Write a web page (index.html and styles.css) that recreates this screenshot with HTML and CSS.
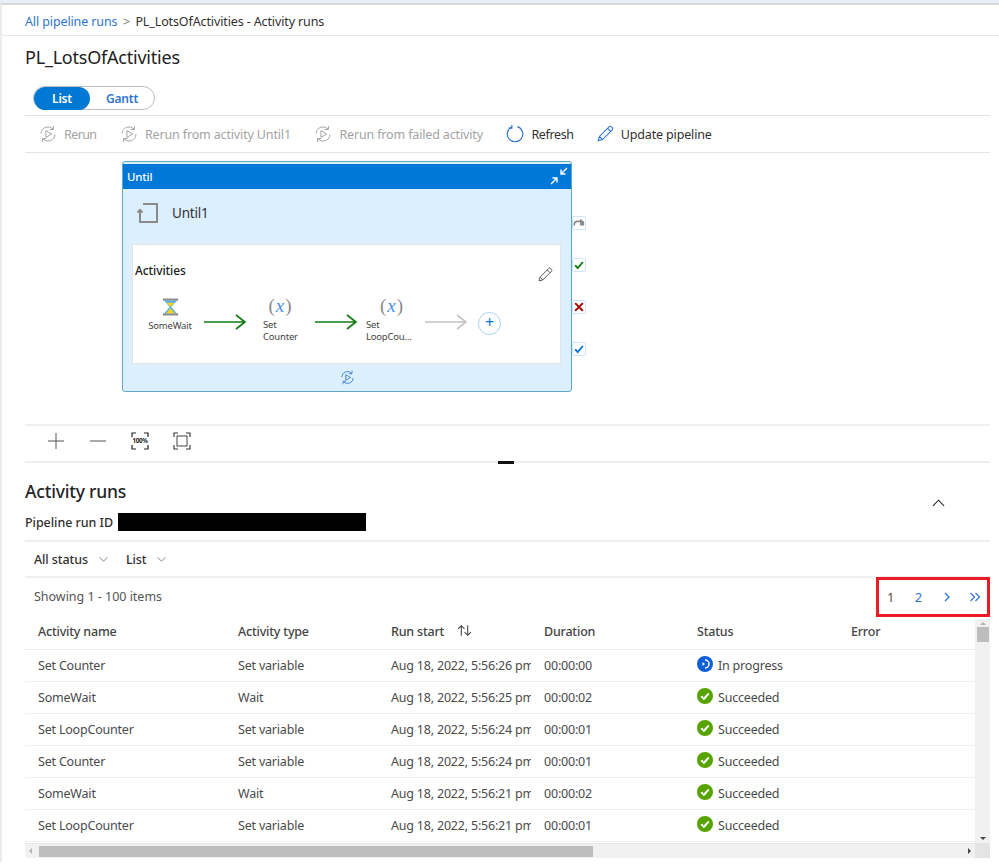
FILE: index.html
```html
<!DOCTYPE html>
<html lang="en">
<head>
<meta charset="utf-8">
<title>PL_LotsOfActivities - Activity runs</title>
<link rel="stylesheet" href="styles.css">
</head>
<body>
<svg class="defs" width="0" height="0" aria-hidden="true">
  <symbol id="rerun" viewBox="0 0 20 20">
    <path d="M2.300 9.500A7.700 7.700 0 0 1 15.600 4.500M17.700 10.500A7.700 7.700 0 0 1 4.400 15.500" fill="none" stroke="currentColor" stroke-width="1.100"/>
    <path d="M16 1v4h-4M4 19v-4h4" fill="none" stroke="currentColor" stroke-width="1.100"/>
    <path d="M7.700 6.200l6.300 3.800-6.300 3.800z" fill="none" stroke="currentColor" stroke-width="1.100"/>
  </symbol>
  <symbol id="pencil" viewBox="0 0 20 20">
    <path d="M2.500 17.500l1.300-4.800L14.500 2a1.900 1.900 0 0 1 2.700 0l.8.800a1.900 1.900 0 0 1 0 2.700L7.300 16.200zM3.800 12.700l3.500 3.500M12.800 3.700l3.500 3.500" fill="none" stroke="currentColor" stroke-width="1.200"/>
  </symbol>
  <symbol id="ok" viewBox="0 0 16 16">
    <circle cx="8" cy="8" r="8" fill="#57a300"/>
    <path d="M4.300 8.300l2.600 2.600 4.800-5.400" fill="none" stroke="#fff" stroke-width="2"/>
  </symbol>
  <symbol id="arrow" viewBox="0 0 42 16">
    <path d="M0 8h41M32 1l9 7-9 7" fill="none" stroke="currentColor" stroke-width="1.700"/>
  </symbol>
  <symbol id="chev" viewBox="0 0 12 8">
    <path d="M1.500 1.500L6 6l4.500-4.500" fill="none" stroke="currentColor" stroke-width="1"/>
  </symbol>
</svg>

<div class="topstrip"></div>
<div class="shell">
  <nav class="crumbs">
    <a class="link">All pipeline runs</a><span class="sep">&gt;</span><span>PL_LotsOfActivities - Activity runs</span>
  </nav>

  <main class="content">
    <h1 class="title">PL_LotsOfActivities</h1>
    <div class="toggle"><span class="toggle-on">List</span><span class="toggle-off">Gantt</span></div>

    <div class="toolbar">
      <span class="tool tool-off tool-short"><svg class="ico"><use href="#rerun"/></svg>Rerun</span>
      <span class="tool tool-off"><svg class="ico"><use href="#rerun"/></svg>Rerun from activity Until1</span>
      <span class="tool tool-off"><svg class="ico"><use href="#rerun"/></svg>Rerun from failed activity</span>
      <span class="tool tool-refresh"><svg class="ico ico-blue" viewBox="0 0 20 20"><path d="M6.300 2.300A8.600 8.600 0 1 0 12.500 1.800" fill="none" stroke="currentColor" stroke-width="1.300"/><path d="M6.500 0v3.500H3" fill="none" stroke="currentColor" stroke-width="1.300"/></svg>Refresh</span>
      <span class="tool"><svg class="ico ico-blue"><use href="#pencil"/></svg>Update pipeline</span>
    </div>

    <section class="canvas">
      <div class="node">
        <header class="node-head">
          <span>Until</span>
          <svg class="collapse" viewBox="0 0 18 18"><path d="M1 17l6-6M2.500 11H7v4.500M17 1l-6 6M15.500 7H11V2.500" fill="none" stroke="#fff" stroke-width="1.400"/></svg>
        </header>
        <div class="node-name">
          <svg class="until-ico" viewBox="0 0 22 22"><path d="M6 2h14v18H3v-11M0.500 10.500L3 8l2.500 2.500" fill="none" stroke="#8a8a8a" stroke-width="2"/></svg>
          <span>Until1</span>
        </div>
        <div class="inner">
          <div class="inner-head">
            <span>Activities</span>
            <svg class="inner-pen"><use href="#pencil"/></svg>
          </div>
          <div class="flow">
            <div class="act act-wait">
              <svg class="hour" viewBox="0 0 18 20"><path d="M1 1h16v2.500H1zM1 16.500h16V19H1z" fill="#8d8d8d"/><path d="M2.500 3.500h13L10 10l5.500 6.500h-13L8 10z" fill="#50b0f0"/><path d="M5 5.500h8L9 10zM9 11l4.500 5.500h-9z" fill="#fcd116"/></svg>
              <span class="act-label">SomeWait</span>
            </div>
            <svg class="arrow arrow-green"><use href="#arrow"/></svg>
            <div class="act act-a">
              <span class="var">(<i>x</i>)</span>
              <span class="act-label">Set<br>Counter</span>
            </div>
            <svg class="arrow arrow-green"><use href="#arrow"/></svg>
            <div class="act act-b">
              <span class="var">(<i>x</i>)</span>
              <span class="act-label">Set<br>LoopCou...</span>
            </div>
            <svg class="arrow arrow-grey"><use href="#arrow"/></svg>
            <span class="add">+</span>
          </div>
        </div>
        <div class="node-foot"><svg class="foot-ico"><use href="#rerun"/></svg></div>
        <div class="side">
          <span class="side-btn"><svg viewBox="0 0 14 14"><path d="M1.500 10V8.500a3.500 3.500 0 0 1 3.500-3.500h5" fill="none" stroke="#8a8a8a" stroke-width="2"/><path d="M8.500 2l4.500 3.500V10H8z" fill="#8a8a8a"/></svg></span>
          <span class="side-btn"><svg viewBox="0 0 14 14"><path d="M2.500 7.500l3 3 6-7" fill="none" stroke="#107c10" stroke-width="2.200"/></svg></span>
          <span class="side-btn"><svg viewBox="0 0 14 14"><path d="M2.500 2.500l9 9M11.500 2.500l-9 9" fill="none" stroke="#a80000" stroke-width="2.400"/></svg></span>
          <span class="side-btn"><svg viewBox="0 0 14 14"><path d="M2.500 7.500l3 3 6-7" fill="none" stroke="#0078d7" stroke-width="2.200"/></svg></span>
        </div>
      </div>
    </section>

    <div class="zoombar">
      <svg class="zoom" viewBox="0 0 16 16"><path d="M0 8h16M8 0v16" fill="none" stroke="#555" stroke-width="1"/></svg>
      <svg class="zoom" viewBox="0 0 16 16"><path d="M0 8h16" fill="none" stroke="#555" stroke-width="1"/></svg>
      <svg class="zoom" viewBox="0 0 16 16"><path d="M0 4V0h4M12 0h4v4M16 12v4h-4M4 16H0v-4" fill="none" stroke="#222" stroke-width="1.200"/><text class="zoom-text" x="8" y="10.200" text-anchor="middle">100%</text></svg>
      <svg class="zoom" viewBox="0 0 16 16"><path d="M0 4V0h4M12 0h4v4M16 12v4h-4M4 16H0v-4" fill="none" stroke="#333" stroke-width="1.100"/><rect x="3" y="3" width="10" height="10" fill="none" stroke="#444" stroke-width="1"/></svg>
    </div>

    <div class="splitter"><span class="grip"></span></div>

    <div class="runs-head">
      <div>
        <h2 class="runs-title">Activity runs</h2>
        <div class="runid"><span>Pipeline run ID</span><span class="redact"></span></div>
      </div>
      <svg class="collapse-up" viewBox="0 0 14 8"><path d="M1 7l6-6 6 6" fill="none" stroke="#222" stroke-width="1.200"/></svg>
    </div>

    <div class="filters">
      <span class="filter">All status<svg class="chev"><use href="#chev"/></svg></span>
      <span class="filter">List<svg class="chev"><use href="#chev"/></svg></span>
    </div>

    <div class="countrow">
      <span class="count">Showing 1 - 100 items</span>
      <div class="pager">
        <span>1</span>
        <a class="link">2</a>
        <a class="link pg-ico"><svg viewBox="0 0 8 10"><path d="M2 1l4 4-4 4" fill="none" stroke="currentColor" stroke-width="1.300"/></svg></a>
        <a class="link pg-ico pg-last"><svg viewBox="0 0 12 10"><path d="M1.500 1l4 4-4 4M6.500 1l4 4-4 4" fill="none" stroke="currentColor" stroke-width="1.200"/></svg></a>
      </div>
    </div>

    <div class="grid-wrap">
      <div class="grid-main">
        <div class="row row-head">
          <span class="cell">Activity name</span>
          <span class="cell">Activity type</span>
          <span class="cell">Run start<svg class="sort" viewBox="0 0 14 12"><path d="M4 11V1.500M1 4.500l3-3 3 3M10 1v9.500M7 7.500l3 3 3-3" fill="none" stroke="#444" stroke-width="1"/></svg></span>
          <span class="cell">Duration</span>
          <span class="cell">Status</span>
          <span class="cell">Error</span>
        </div>
        <div class="row">
          <span class="cell">Set Counter</span><span class="cell">Set variable</span><span class="cell clip">Aug 18, 2022, 5:56:26 pm</span><span class="cell">00:00:00</span>
          <span class="cell status"><svg class="st" viewBox="0 0 16 16"><circle cx="8" cy="8" r="8" fill="#0f5fd7"/><path d="M8 4a4 4 0 0 1 0 8" fill="none" stroke="#fff" stroke-width="1.500"/><path d="M5.500 6v4L8 8z" fill="#fff"/></svg>In progress</span><span class="cell"></span>
        </div>
        <div class="row">
          <span class="cell">SomeWait</span><span class="cell">Wait</span><span class="cell clip">Aug 18, 2022, 5:56:25 pm</span><span class="cell">00:00:02</span>
          <span class="cell status"><svg class="st"><use href="#ok"/></svg>Succeeded</span><span class="cell"></span>
        </div>
        <div class="row">
          <span class="cell">Set LoopCounter</span><span class="cell">Set variable</span><span class="cell clip">Aug 18, 2022, 5:56:24 pm</span><span class="cell">00:00:01</span>
          <span class="cell status"><svg class="st"><use href="#ok"/></svg>Succeeded</span><span class="cell"></span>
        </div>
        <div class="row">
          <span class="cell">Set Counter</span><span class="cell">Set variable</span><span class="cell clip">Aug 18, 2022, 5:56:24 pm</span><span class="cell">00:00:01</span>
          <span class="cell status"><svg class="st"><use href="#ok"/></svg>Succeeded</span><span class="cell"></span>
        </div>
        <div class="row">
          <span class="cell">SomeWait</span><span class="cell">Wait</span><span class="cell clip">Aug 18, 2022, 5:56:21 pm</span><span class="cell">00:00:02</span>
          <span class="cell status"><svg class="st"><use href="#ok"/></svg>Succeeded</span><span class="cell"></span>
        </div>
        <div class="row">
          <span class="cell">Set LoopCounter</span><span class="cell">Set variable</span><span class="cell clip">Aug 18, 2022, 5:56:21 pm</span><span class="cell">00:00:01</span>
          <span class="cell status"><svg class="st"><use href="#ok"/></svg>Succeeded</span><span class="cell"></span>
        </div>
      </div>
      <div class="vscroll"><i class="tri tri-up"></i><b class="vthumb"></b><i class="tri tri-down"></i></div>
      <div class="hscroll"><i class="tri tri-left"></i><b class="hthumb"></b><i class="tri tri-right"></i></div>
      <div class="corner"></div>
    </div>
  </main>
</div>
</body>
</html>
```

FILE: styles.css
```css
* { box-sizing: border-box; }
html, body { margin: 0; padding: 0; }
body {
  width: 999px;
  height: 864px;
  overflow: hidden;
  background: #fff;
  color: #323130;
  font-family: "Noto Sans", "Open Sans", sans-serif;
  font-size: 12.5px;
  letter-spacing: -0.2px;
}
.defs { position: absolute; }
.link { color: #2f74d0; text-decoration: none; }

.topstrip { height: 3px; background: #e6eff8; }
.shell { border-top: 2px solid #d8d8d8; border-left: 2px solid #ebebeb; height: 859px; }

.crumbs {
  height: 31px;
  padding: 3px 0 0 23px;
  display: flex;
  align-items: center;
  border-bottom: 1px solid #e6e6e6;
  letter-spacing: -0.12px;
}
.sep { margin: 0 5.500px; color: #777; }

.content { padding: 0 9px 0 23px; }
.title { margin: 0; padding-top: 8px; height: 50px; font-size: 18px; font-weight: 400; line-height: 26px; color: #222; letter-spacing: -0.22px; }

.toggle {
  width: 122px;
  height: 24px;
  margin-left: 8px;
  display: flex;
  border: 1px solid #bdbdbd;
  border-radius: 12px;
  font-weight: 600;
  font-size: 12px;
}
.toggle-on { width: 56px; margin: -0.5px 0; background: #0078d4; color: #fff; border-radius: 12px; display: flex; align-items: center; justify-content: center; }
.toggle-off { flex: 1; color: #2f74d0; display: flex; align-items: center; justify-content: center; }

.toolbar {
  height: 38px;
  margin-top: 5px;
  padding-left: 14px;
  display: flex;
  align-items: center;
  gap: 23.500px;
  border-top: 1px solid #e3e3e3;
  border-bottom: 1px solid #e3e3e3;
  color: #323130;
  letter-spacing: -0.15px;
}
.tool { display: flex; align-items: center; gap: 7px; }
.tool-off { color: #a3a3a3; }
.tool-short { letter-spacing: -0.6px; }
.tool-refresh { letter-spacing: -0.35px; margin-right: -1.500px; }
.ico { width: 18px; height: 18px; color: #a3a3a3; }
.ico-blue { color: #2f74d0; }

.canvas { position: relative; height: 271px; }
.node {
  position: absolute;
  left: 97px;
  top: 8px;
  width: 450px;
  height: 231px;
  background: #dcefff;
  border: 1.500px solid #5fa8c4;
  border-radius: 3px;
  display: flex;
  flex-direction: column;
}
.node-head {
  height: 24.500px;
  margin-top: 2px;
  padding: 0 3px 0 4px;
  background: #0078d7;
  color: #fff;
  font-weight: 500;
  font-size: 11.500px;
  display: flex;
  align-items: center;
  justify-content: space-between;
}
.collapse { width: 18px; height: 18px; }
.node-name { height: 55.500px; padding: 0 0 6px 14px; display: flex; align-items: center; gap: 13px; font-size: 13.500px; color: #333; }
.until-ico { width: 22px; height: 22px; }
.inner {
  height: 120px;
  margin: 0 10px 0 9px;
  background: #fff;
  border: 1px solid #e4e4e4;
  padding: 17px 0 0 2px;
}
.inner-head { display: flex; justify-content: space-between; align-items: flex-start; font-size: 12px; font-weight: 500; color: #222; height: 34px; padding-right: 7px; letter-spacing: -0.1px; }
.inner-pen { width: 16px; height: 16px; margin-top: 5px; color: #555; }
.flow { display: flex; align-items: flex-start; height: 47px; padding-left: 10px; }
.act { display: flex; flex-direction: column; align-items: center; font-size: 9.500px; line-height: 12px; color: #444; flex: none; }
.act-wait { width: 50px; margin: 1px 9px 0 0; }
.act-a { width: 69px; padding-right: 1px; }
.act-b { width: 68px; padding-left: 1px; }
.act-a .act-label { align-self: flex-start; padding-left: 17px; }
.act-b .act-label { align-self: flex-start; padding-left: 8px; }
.act-label { white-space: nowrap; }
.hour { width: 17px; height: 20px; margin-bottom: 3px; }
.var { font-family: "Liberation Serif", serif; font-size: 19px; line-height: 20px; color: #8a8a8a; margin-bottom: 3px; letter-spacing: 0; }
.var i { color: #4a90e2; padding: 0 1px; }
.arrow { width: 42px; height: 16px; flex: none; margin-top: 18px; }
.arrow-green { color: #107c10; }
.arrow-grey { color: #c4c4c4; margin-right: 11px; }
.add {
  width: 23px;
  height: 23px;
  margin-top: 16px;
  border: 1.500px solid #a6d3f0;
  border-radius: 50%;
  color: #0078d7;
  font-size: 16px;
  line-height: 19px;
  text-align: center;
  flex: none;
}
.node-foot { flex: 1; display: flex; align-items: center; justify-content: center; }
.foot-ico { width: 15px; height: 15px; color: #2f74d0; }
.side {
  position: absolute;
  left: 449px;
  top: 54px;
  display: flex;
  flex-direction: column;
  gap: 28px;
}
.side-btn { width: 14px; height: 14px; display: block; background: #fff; border: 1px solid #cfe6fa; border-radius: 2px; }
.side-btn svg { width: 12px; height: 12px; display: block; }

.zoombar { height: 37px; padding: 0 0 6px 23px; display: flex; align-items: center; gap: 26px; border-top: 2px solid #efefef; }
.zoom { width: 16px; height: 16px; overflow: visible; }
.zoom-text { font-size: 6.200px; font-weight: 700; letter-spacing: -0.3px; fill: #222; }

.splitter { height: 2px; background: #eeeeee; position: relative; }
.grip { position: absolute; left: 473px; top: 0; width: 16px; height: 3px; background: #111; }

.runs-head { height: 79px; padding: 16px 45px 0 0; display: flex; justify-content: space-between; align-items: flex-start; border-bottom: 2px solid #efefef; }
.runs-title { margin: 0; font-size: 17.500px; font-weight: 500; line-height: 25px; color: #252525; letter-spacing: -0.2px; }
.runid { margin-top: 9px; display: flex; align-items: center; gap: 5px; height: 18px; font-weight: 500; color: #323130; font-size: 12.5px; letter-spacing: -0.05px; }
.redact { width: 248px; height: 18px; background: #000; }
.collapse-up { width: 13px; height: 8px; margin-top: 20px; }

.filters { height: 36px; padding-left: 9px; display: flex; align-items: center; gap: 17px; font-weight: 500; border-bottom: 2px solid #efefef; letter-spacing: -0.1px; }
.filter { display: flex; align-items: center; gap: 10px; }
.chev { width: 11px; height: 7px; color: #777; }

.countrow { height: 37px; display: flex; justify-content: space-between; padding-left: 9px; }
.count { align-self: center; margin-top: -1px; color: #555; letter-spacing: -0.02px; }
.pager {
  width: 114px;
  height: 40px;
  margin-top: -1px;
  padding-left: 8px;
  border: 3px solid #ed1c24;
  display: flex;
  align-items: center;
  gap: 20.500px;
  font-size: 13px;
  color: #5a5040;
  position: relative;
  z-index: 1;
  background: #fff;
}
.pg-ico { display: flex; }
.pg-ico svg { width: 8px; height: 10px; }
.pg-last { margin-left: -2.500px; }
.pg-last svg { width: 12px; }

.grid-wrap {
  width: 965px;
  height: 243px;
  display: grid;
  grid-template-columns: 950px 15px;
  grid-template-rows: 228px 15px;
}
.grid-main { overflow: hidden; }
.row {
  height: 32px;
  padding-left: 13px;
  display: grid;
  grid-template-columns: 200px 153px 153px 153px 154px 1fr;
  align-items: center;
  border-bottom: 1px solid #f1f1f1;
  color: #4a4a4a;
}
.row-head { height: 35px; padding-bottom: 1px; font-weight: 500; color: #444; border-bottom-color: #ececec; }
.cell { white-space: nowrap; display: flex; align-items: center; }
.clip { display: block; overflow: hidden; width: 140px; }
.sort { width: 15px; height: 13px; margin-left: 13px; margin-top: -3px; }
.status { gap: 5px; }
.st { width: 16px; height: 16px; margin-top: -3px; flex: none; }

.vscroll { margin-top: 4px; background: #f1f1f1; grid-column: 2; grid-row: 1; display: flex; flex-direction: column; align-items: center; padding-top: 3px; }
.vthumb { display: block; width: 12px; height: 15px; margin-top: 2px; background: #bdbdbd; }
.hscroll { background: #f1f1f1; border-top: 1px solid #e8e8e8; grid-column: 1; grid-row: 2; display: flex; align-items: center; }
.hthumb { display: block; width: 554px; height: 11px; margin-left: 7px; background: #bdbdbd; }
.corner { grid-column: 2; grid-row: 2; background: #e4e4e4; }
.tri { display: block; width: 0; height: 0; border: 3px solid transparent; }
.tri-up { border-bottom-color: #b5b5b5; border-top-width: 0; }
.tri-down { border-top-color: #444; border-bottom-width: 0; margin-top: auto; margin-bottom: 3px; }
.tri-left { border-right-color: #b5b5b5; border-left-width: 0; margin-left: 4px; }
.tri-right { border-left-color: #444; border-right-width: 0; margin-left: auto; margin-right: 4px; }
```
